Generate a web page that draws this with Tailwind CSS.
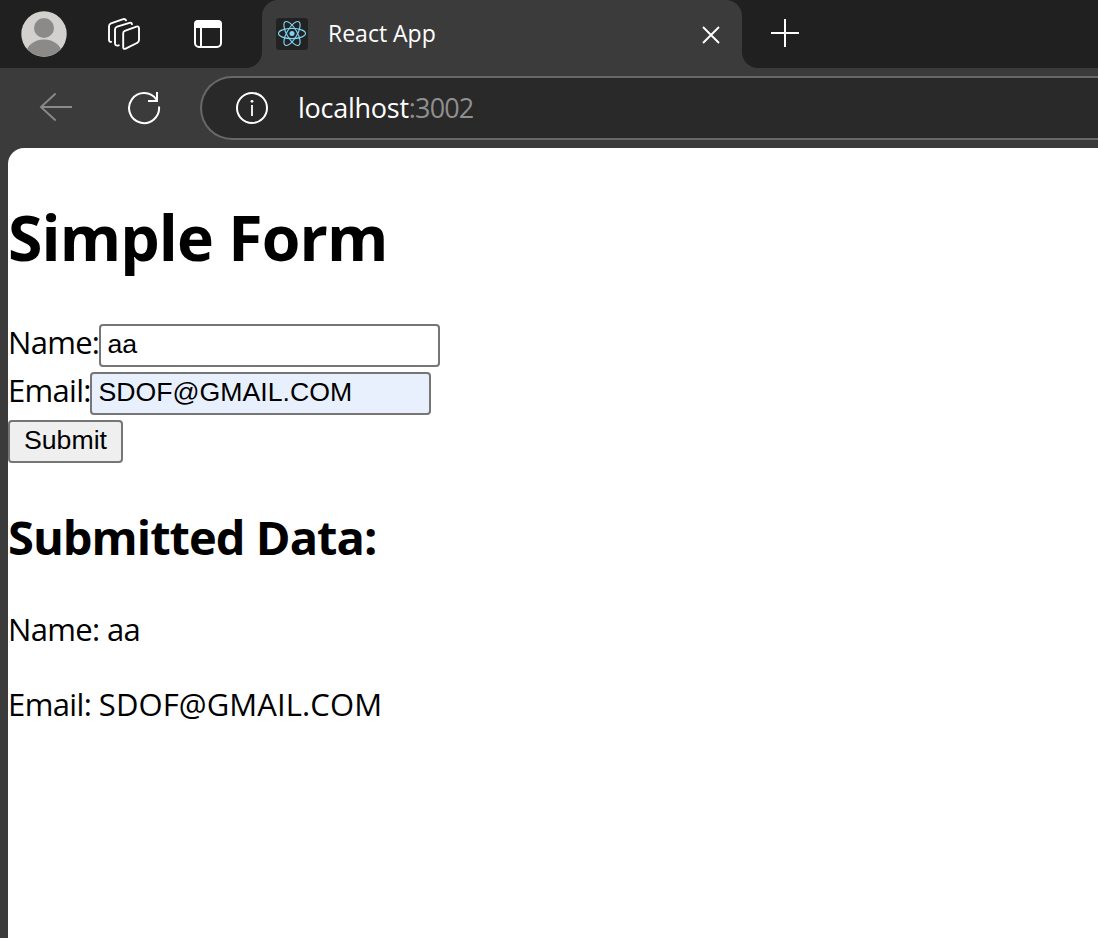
<!DOCTYPE html>
<html lang="en">
<head>
<meta charset="utf-8">
<title>React App</title>
<script src="https://cdn.jsdelivr.net/npm/@tailwindcss/browser@4"></script>
</head>
<body class="h-[938px] w-[1098px] overflow-hidden bg-[#3b3b3b] font-['Open_Sans','Noto_Sans',sans-serif] text-black">
<header class="flex h-[68px] bg-[#3b3b3b] text-white">
  <div class="flex w-[262px] shrink-0 items-center rounded-br-[16px] bg-[#202020] pl-[21px]">
    <svg class="size-[46px]" viewBox="0 0 46 46"><defs><clipPath id="avatar"><circle cx="23" cy="23" r="22.5"/></clipPath></defs><circle cx="23" cy="23" r="22.7" fill="#d2d1cd"/><g clip-path="url(#avatar)" fill="#8b8a88"><circle cx="23" cy="17" r="10"/><ellipse cx="23" cy="43" rx="18" ry="14.5"/></g></svg>
    <svg class="ml-[40px] size-[34px]" viewBox="107 17 34 34" fill="none" stroke="#fff" stroke-width="1.9" stroke-linejoin="round" stroke-linecap="round"><path d="M124.8 30.8 L136.5 26.6 Q139 25.8 139 28.4 V40 Q139 42.2 137 43 L125.6 48.6 Q123.2 49.6 123.2 47 V33.2 Q123.2 31.4 124.8 30.8Z"/><path d="M118.8 45.3 Q115 46.4 115 43 V29.5 Q115 27.4 117.2 26.6 L129.5 22.8 Q131.5 22.2 132 24.2"/><path d="M111.2 41.9 Q109 42 109 39.5 V26.5 Q109 24.2 111 23.4 L122.5 19.3 Q125 18.4 126 20.3"/></svg>
    <svg class="ml-[52px] size-[30px]" viewBox="0 0 30 30" fill="none"><rect x="2" y="2" width="26" height="26" rx="4" stroke="#fff" stroke-width="2"/><path d="M1 9V5Q1 1 5 1H25Q29 1 29 5V9Z" fill="#fff"/><path d="M8 9V28" stroke="#fff" stroke-width="2"/></svg>
  </div>
  <div class="flex w-[480px] shrink-0 bg-[#202020]">
    <div class="flex w-full items-center rounded-t-[16px] bg-[#3b3b3b] pl-[14px]">
      <svg class="size-[32px]" viewBox="0 0 32 32" fill="none"><rect width="32" height="32" rx="3.5" fill="#222"/><g stroke="#7fd3f2" stroke-width="1.15"><ellipse cx="16" cy="15.5" rx="13.5" ry="5.1"/><ellipse cx="16" cy="15.5" rx="13.5" ry="5.1" transform="rotate(60 16 15.5)"/><ellipse cx="16" cy="15.5" rx="13.5" ry="5.1" transform="rotate(120 16 15.5)"/></g><circle cx="16" cy="15.5" r="2.5" fill="#7fd3f2"/></svg>
      <span class="mb-[2px] ml-[20px] text-[23px] leading-[32px] whitespace-nowrap">React App</span>
      <svg class="mt-[2px] mr-[22px] ml-auto size-[18px]" viewBox="0 0 18 18" stroke="#fff" stroke-width="1.9"><path d="M1 1 17 17M17 1 1 17"/></svg>
    </div>
  </div>
  <div class="flex-1 rounded-bl-[16px] bg-[#202020] pt-[19px] pl-[29px]">
    <svg class="size-[28px]" viewBox="0 0 28 28" stroke="#fff" stroke-width="2"><path d="M0 14H28M14 0V28"/></svg>
  </div>
</header>
<nav class="flex h-[80px] bg-[#3b3b3b] pt-[8px]">
  <svg class="mt-[14px] ml-[39px] size-[34px] shrink-0" viewBox="39 90 34 34" fill="none" stroke="#898989" stroke-width="1.9"><path d="M72 107H41M55.6 93.5 41 107 55.6 120.5"/></svg>
  <svg class="mt-[14px] ml-[54px] size-[36px] shrink-0" viewBox="127 90 36 36" fill="none" stroke="#fff" stroke-width="2"><path d="M159 106.5A15 15 0 1 1 156.6 99.8"/><path d="M157 92V101H148"/></svg>
  <div class="ml-[37px] flex h-[64px] flex-1 items-center rounded-l-full border-2 border-r-0 border-[#686868] bg-[#292929] pl-[33px]">
    <svg class="size-[34px]" viewBox="0 0 34 34" fill="none"><circle cx="17" cy="17" r="15" stroke="#fff" stroke-width="2"/><path d="M17 14V25" stroke="#fff" stroke-width="1.8"/><circle cx="17" cy="10.3" r="1.4" fill="#fff"/></svg>
    <span class="ml-[29px] text-[27px] leading-[36px] tracking-[-0.25px] whitespace-nowrap text-white">localhost<span class="tracking-[-0.85px] text-[#8f8f8f]">:3002</span></span>
  </div>
</nav>
<main class="ml-[8px] h-[790px] rounded-tl-[16px] bg-white pt-[46px] text-[31px]">
  <h1 class="text-[62.5px] leading-[86px] font-bold tracking-[-0.9px] whitespace-nowrap">Simple Form</h1>
  <form class="mt-[38px]">
    <div class="flex h-[48px]">
      <label for="name" class="w-[91px] leading-[48px] tracking-[-0.7px] whitespace-nowrap">Name:</label>
      <input id="name" type="text" value="aa" class="mt-[6px] h-[43px] w-[341px] rounded-[4px] border-2 border-[#767676] bg-white px-[6.5px] pb-[2px] font-['Liberation_Sans',Arial,sans-serif] text-[26.67px]">
    </div>
    <div class="flex h-[48px]">
      <label for="email" class="w-[82px] leading-[48px] tracking-[-0.7px] whitespace-nowrap">Email:</label>
      <input id="email" type="text" value="SDOF@GMAIL.COM" class="mt-[6px] h-[43px] w-[341px] rounded-[4px] border-2 border-[#767676] bg-[#e8f0fe] px-[6.5px] pb-[2px] font-['Liberation_Sans',Arial,sans-serif] text-[26.67px]">
    </div>
    <div class="flex h-[48px]">
      <button type="button" class="mt-[6px] h-[43px] w-[115px] rounded-[4px] border-2 border-[#767676] bg-[#efefef] pb-[3px] font-['Liberation_Sans',Arial,sans-serif] text-[26.67px] leading-[36px]">Submit</button>
    </div>
  </form>
  <h2 class="mt-[43px] text-[47px] leading-[64px] font-bold tracking-[-0.97px] whitespace-nowrap">Submitted Data:</h2>
  <p class="mt-[39px] leading-[42px] tracking-[-0.65px] whitespace-nowrap">Name: aa</p>
  <p class="mt-[33px] leading-[42px] whitespace-nowrap"><span class="tracking-[-0.6px]">Email: </span><span class="tracking-[0.1px]">SDOF@GMAIL.COM</span></p>
</main>
</body>
</html>
